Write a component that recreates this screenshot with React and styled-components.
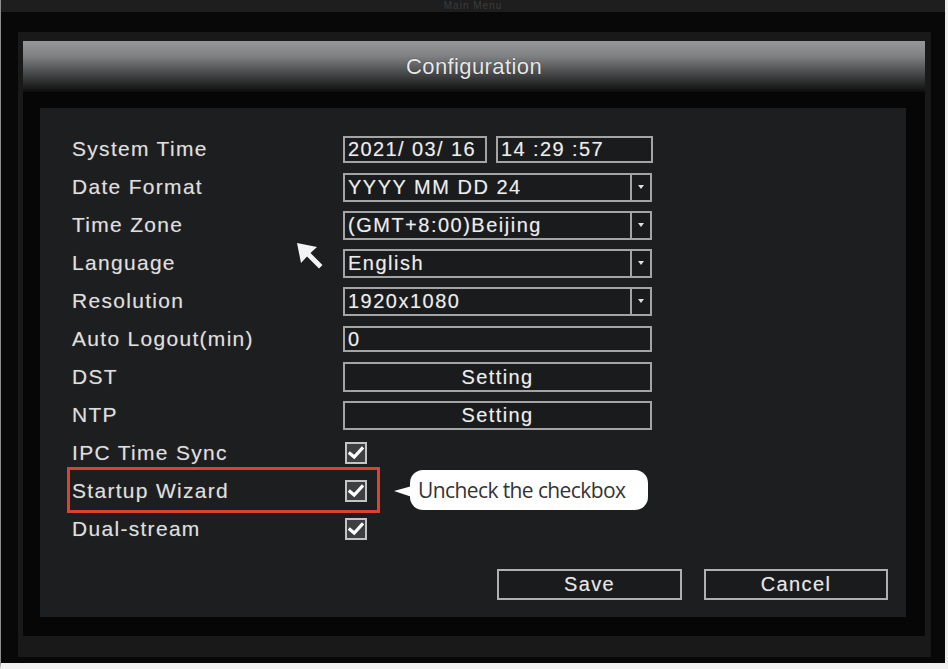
import React from 'react';
import styled, { createGlobalStyle } from 'styled-components';

const GlobalStyle = createGlobalStyle`
    html, body {
        margin: 0;
        padding: 0;
        background: #080808;
    }
    * {
        box-sizing: border-box;
    }
`;

const Screen = styled.div`
    width: 948px;
    height: 669px;
    background: #080808;
    border-left: 1px solid #8e8e8e;
    border-right: 3px solid #eeeeee;
    border-bottom: 6px solid #f2f2f2;
    overflow: hidden;
    font-family: "Liberation Sans", Arial, sans-serif;
`;

const TopStrip = styled.div`
    height: 12px;
    background: #1e1e1e;
    display: flex;
    align-items: center;
    justify-content: center;
`;

const StripText = styled.span`
    font-size: 10px;
    line-height: 12px;
    color: #3c3c3c;
    letter-spacing: 1px;
`;

const Frame = styled.div`
    margin: 20px 0 0 17px;
    width: 913px;
    height: 625px;
    background: #191919;
    padding: 9px 6px 21px 5px;
    display: flex;
    flex-direction: column;
`;

const TitleBar = styled.div`
    height: 51px;
    display: flex;
    align-items: center;
    justify-content: center;
    background: linear-gradient(#96989a 0%, #7e8082 30%, #4a4b4c 62%, #0d0d0d 100%);
    color: #e8e8e8;
    font-size: 22px;
    letter-spacing: 0.4px;
    text-shadow: 0 0 1px rgba(0, 0, 0, 0.6);
`;

const Body = styled.div`
    flex: 1;
    background: #060606;
    padding: 16px 19px 19px 17px;
    display: flex;
`;

const Panel = styled.div`
    position: relative;
    flex: 1;
    background: #1d1e1f;
    padding: 22px 18px 17px 32px;
    display: flex;
    flex-direction: column;
`;

const Rows = styled.div`
    display: flex;
    flex-direction: column;
`;

const Row = styled.div`
    position: relative;
    height: 38px;
    display: grid;
    grid-template-columns: 271px 310px;
    align-items: center;
`;

const Label = styled.div`
    color: #dedede;
    font-size: 21px;
    letter-spacing: 1.3px;
    white-space: nowrap;
    text-shadow: 0 0 1px rgba(255, 255, 255, 0.35);
`;

const Pair = styled.div`
    display: flex;
    gap: 9px;
`;

const Box = styled.div`
    width: ${(p) => p.$w || 309}px;
    height: ${(p) => p.$h || 28}px;
    border: 2px solid #a4a4a4;
    background: #1a1b1c;
    display: flex;
    align-items: center;
    justify-content: ${(p) => (p.$center ? 'center' : 'flex-start')};
    padding-left: ${(p) => (p.$center ? 0 : 3)}px;
    color: #ececec;
    font-size: 20px;
    letter-spacing: 1.4px;
    white-space: nowrap;
    text-shadow: 0 0 1px rgba(255, 255, 255, 0.35);
`;

const SelectBox = styled.div`
    width: 309px;
    height: 29px;
    border: 2px solid #a4a4a4;
    background: #1a1b1c;
    display: flex;
    align-items: stretch;
`;

const SelectValue = styled.div`
    flex: 1;
    display: flex;
    align-items: center;
    padding-left: 3px;
    color: #ececec;
    font-size: 20px;
    letter-spacing: 1.5px;
    white-space: nowrap;
    text-shadow: 0 0 1px rgba(255, 255, 255, 0.35);
`;

const ArrowCell = styled.div`
    width: 20px;
    border-left: 2px solid #a4a4a4;
    display: flex;
    align-items: center;
    justify-content: center;

    &::after {
        content: '';
        border-left: 3px solid transparent;
        border-right: 3px solid transparent;
        border-top: 4px solid #e0e0e0;
    }
`;

const Check = styled.div`
    width: 22px;
    height: 22px;
    margin-left: 2px;
    border: 2px solid #c4c4c4;
    background: #3e3f40;
    display: flex;
    align-items: center;
    justify-content: center;
`;

const Highlight = styled.div`
    position: absolute;
    left: -5px;
    top: -5px;
    width: 313px;
    height: 46px;
    border: 3.5px solid #d8442e;
    pointer-events: none;
`;

const Callout = styled.div`
    position: absolute;
    left: 338px;
    top: -2px;
    width: 238px;
    height: 40px;
    background: #ffffff;
    border-radius: 13px;
    display: flex;
    align-items: center;
    padding-left: 8px;
    color: #333333;
    font-family: "Open Sans", "Noto Sans", sans-serif;
    font-weight: 500;
    font-size: 21px;
    letter-spacing: -0.6px;
    white-space: nowrap;

    &::before {
        content: '';
        position: absolute;
        left: -16px;
        top: 16px;
        border-right: 18px solid #ffffff;
        border-top: 5px solid transparent;
        border-bottom: 6px solid transparent;
    }
`;

const Cursor = styled.svg`
    position: absolute;
    left: 257px;
    top: 135px;
    width: 26px;
    height: 26px;
`;

const Buttons = styled.div`
    margin-top: 21px;
    display: flex;
    justify-content: flex-end;
    gap: 22px;
`;

const Button = styled.button`
    width: ${(p) => p.$w}px;
    height: 31px;
    border: 2px solid #b0b0b0;
    background: #1a1b1c;
    color: #e6e6e6;
    font-family: "Liberation Sans", Arial, sans-serif;
    font-size: 20px;
    letter-spacing: 1.4px;
    padding: 0;
    cursor: pointer;
    text-shadow: 0 0 1px rgba(255, 255, 255, 0.35);
`;

const CheckIcon = () => (
    <svg width="16" height="14" viewBox="0 0 16 14">
        <path d="M2 7.5 L6.2 11 L14 2.5" fill="none" stroke="#ffffff" strokeWidth="3.2" strokeLinecap="square" />
    </svg>
);

const Select = ({ value }) => (
    <SelectBox>
        <SelectValue>{value}</SelectValue>
        <ArrowCell />
    </SelectBox>
);

const App = () => {
    return (
        <>
            <GlobalStyle />
            <Screen>
                <TopStrip>
                    <StripText>Main Menu</StripText>
                </TopStrip>
                <Frame>
                    <TitleBar>Configuration</TitleBar>
                    <Body>
                        <Panel>
                            <Cursor viewBox="0 0 26 26">
                                <polygon points="0,0 20,4 13.5,10 25.5,22 22,25.5 10,13.5 4,20" fill="#f4f4f4" />
                            </Cursor>
                            <Rows>
                                <Row>
                                    <Label>System Time</Label>
                                    <Pair>
                                        <Box $w={144} $h={27}>2021/ 03/ 16</Box>
                                        <Box $w={157} $h={27}>14 :29 :57</Box>
                                    </Pair>
                                </Row>
                                <Row>
                                    <Label>Date Format</Label>
                                    <Select value="YYYY MM DD 24" />
                                </Row>
                                <Row>
                                    <Label>Time Zone</Label>
                                    <Select value="(GMT+8:00)Beijing" />
                                </Row>
                                <Row>
                                    <Label>Language</Label>
                                    <Select value="English" />
                                </Row>
                                <Row>
                                    <Label>Resolution</Label>
                                    <Select value="1920x1080" />
                                </Row>
                                <Row>
                                    <Label>Auto Logout(min)</Label>
                                    <Box $h={26}>0</Box>
                                </Row>
                                <Row>
                                    <Label>DST</Label>
                                    <Box $h={30} $center>Setting</Box>
                                </Row>
                                <Row>
                                    <Label>NTP</Label>
                                    <Box $h={29} $center>Setting</Box>
                                </Row>
                                <Row>
                                    <Label>IPC Time Sync</Label>
                                    <Check><CheckIcon /></Check>
                                </Row>
                                <Row>
                                    <Label>Startup Wizard</Label>
                                    <Check><CheckIcon /></Check>
                                    <Highlight />
                                    <Callout>Uncheck the checkbox</Callout>
                                </Row>
                                <Row>
                                    <Label>Dual-stream</Label>
                                    <Check><CheckIcon /></Check>
                                </Row>
                            </Rows>
                            <Buttons>
                                <Button $w={185}>Save</Button>
                                <Button $w={184}>Cancel</Button>
                            </Buttons>
                        </Panel>
                    </Body>
                </Frame>
            </Screen>
        </>
    );
};

export default App;
